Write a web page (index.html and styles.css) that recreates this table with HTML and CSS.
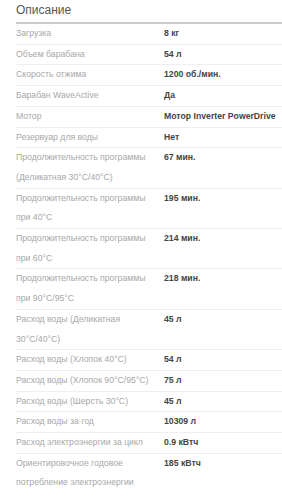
FILE: index.html
```html
<!DOCTYPE html>
<html lang="ru">
<head>
<meta charset="utf-8">
<link rel="stylesheet" href="styles.css">
</head>
<body>
<section class="specs">
  <h2 class="specs-title">Описание</h2>
  <div class="specs-list">
    <div class="row"><div class="label">Загрузка</div><div class="value">8 кг</div></div>
    <div class="row"><div class="label">Объем барабана</div><div class="value">54 л</div></div>
    <div class="row"><div class="label">Скорость отжима</div><div class="value">1200 об./мин.</div></div>
    <div class="row"><div class="label">Барабан WaveActive</div><div class="value">Да</div></div>
    <div class="row"><div class="label">Мотор</div><div class="value">Мотор Inverter PowerDrive</div></div>
    <div class="row"><div class="label">Резервуар для воды</div><div class="value">Нет</div></div>
    <div class="row"><div class="label">Продолжительность программы (Деликатная 30°C/40°C)</div><div class="value">67 мин.</div></div>
    <div class="row"><div class="label">Продолжительность программы при 40°C</div><div class="value">195 мин.</div></div>
    <div class="row"><div class="label">Продолжительность программы при 60°C</div><div class="value">214 мин.</div></div>
    <div class="row"><div class="label">Продолжительность программы при 90°C/95°C</div><div class="value">218 мин.</div></div>
    <div class="row"><div class="label">Расход воды (Деликатная 30°C/40°C)</div><div class="value">45 л</div></div>
    <div class="row"><div class="label">Расход воды (Хлопок 40°C)</div><div class="value">54 л</div></div>
    <div class="row"><div class="label">Расход воды (Хлопок 90°C/95°C)</div><div class="value">75 л</div></div>
    <div class="row"><div class="label">Расход воды (Шерсть 30°C)</div><div class="value">45 л</div></div>
    <div class="row"><div class="label">Расход воды за год</div><div class="value">10309 л</div></div>
    <div class="row"><div class="label">Расход электроэнергии за цикл</div><div class="value">0.9 кВтч</div></div>
    <div class="row"><div class="label">Ориентировочное годовое потребление электроэнергии</div><div class="value">185 кВтч</div></div>
  </div>
</section>
</body>
</html>
```
FILE: styles.css
```css
html, body {
  margin: 0;
  padding: 0;
  background: #ffffff;
}

body {
  font-family: "Liberation Sans", Arial, sans-serif;
  overflow: hidden;
}

.specs {
  padding-left: 16px;
}

.specs-title {
  margin: 0;
  padding: 2px 0 4px;
  font-size: 12px;
  line-height: 16px;
  font-weight: normal;
  color: #555555;
  border-bottom: 2px solid #cccccc;
}

.specs-list {
  display: flex;
  flex-direction: column;
}

.row {
  display: flex;
  border-bottom: 1px solid #efefef;
  font-size: 8.7px;
  line-height: 19.7px;
}

.row:last-child {
  border-bottom: none;
}

.label {
  flex: 0 0 148px;
  box-sizing: border-box;
  padding-right: 8px;
  color: #a8a8a8;
}

.value {
  flex: 1;
  font-weight: bold;
  color: #444444;
}
```
